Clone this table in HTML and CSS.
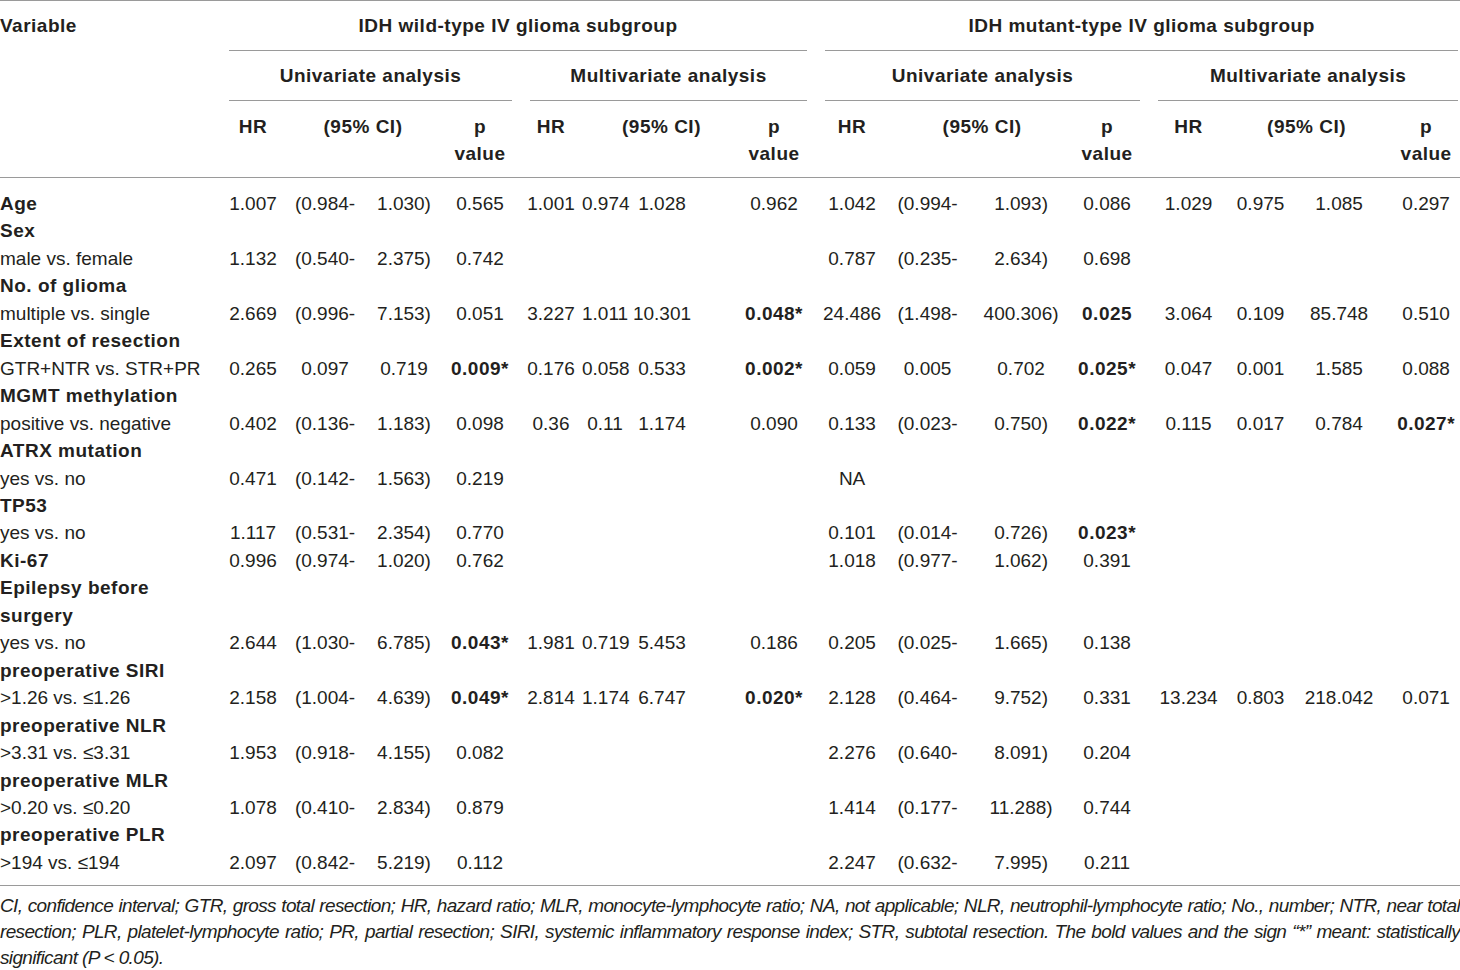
FILE: index.html
```html
<!DOCTYPE html>
<html lang="en">

<head>
    <meta charset="UTF-8">
    <meta name="viewport" content="width=device-width, initial-scale=1.0">
    <title>IDH IV glioma subgroup analysis</title>
    <link rel="stylesheet" href="styles.css">
</head>

<body>
    <table class="hr-table">
        <colgroup>
            <col class="col-var">
            <col class="col-1"><col class="col-2"><col class="col-3"><col class="col-4">
            <col class="col-5"><col class="col-6"><col class="col-7"><col class="col-8">
            <col class="col-9"><col class="col-10"><col class="col-11"><col class="col-12">
            <col class="col-13"><col class="col-14"><col class="col-15"><col class="col-16">
        </colgroup>
        <thead>
            <!-- subgroup -->
            <tr class="row-group">
                <th class="var-head">Variable</th>
                <th colspan="8" class="group"><div class="rule">IDH wild-type IV glioma subgroup</div></th>
                <th colspan="8" class="group group-last"><div class="rule">IDH mutant-type IV glioma subgroup</div></th>
            </tr>
            <!-- analysis -->
            <tr class="row-group">
                <th></th>
                <th colspan="4" class="group"><div class="rule">Univariate analysis</div></th>
                <th colspan="4" class="group"><div class="rule">Multivariate analysis</div></th>
                <th colspan="4" class="group"><div class="rule">Univariate analysis</div></th>
                <th colspan="4" class="group group-last"><div class="rule">Multivariate analysis</div></th>
            </tr>
            <!-- columns -->
            <tr class="row-cols">
                <th></th>
                <th class="c1">HR</th>
                <th colspan="2" class="ci-a">(95% CI)</th>
                <th class="c4">p<br>value</th>
                <th class="c5">HR</th>
                <th colspan="2" class="ci-b">(95% CI)</th>
                <th class="c8">p<br>value</th>
                <th class="c9">HR</th>
                <th colspan="2" class="ci-c">(95% CI)</th>
                <th class="c12">p<br>value</th>
                <th class="c13">HR</th>
                <th colspan="2" class="ci-d">(95% CI)</th>
                <th class="c16">p<br>value</th>
            </tr>
        </thead>
        <tbody id="rows">
            <!-- rows are rendered below -->
        </tbody>
    </table>

    <p class="note">CI, confidence interval; GTR, gross total resection; HR, hazard ratio; MLR, monocyte-lymphocyte ratio; NA, not applicable; NLR, neutrophil-lymphocyte ratio; No., number; NTR, near total resection; PLR, platelet-lymphocyte ratio; PR, partial resection; SIRI, systemic inflammatory response index; STR, subtotal resection. The bold values and the sign “*” meant: statistically significant (P &lt; 0.05).</p>

    <script>
        document.addEventListener("DOMContentLoaded", () => {
            // HR, CI low, CI high, p  x  (wild uni, wild multi, mutant uni, mutant multi)
            const rows = [
                { label: "Age", head: true, values: ["1.007", "(0.984-", "1.030)", "0.565", "1.001", "0.974", "1.028", "0.962", "1.042", "(0.994-", "1.093)", "0.086", "1.029", "0.975", "1.085", "0.297"] },
                { label: "Sex", head: true, values: [] },
                { label: "male vs. female", values: ["1.132", "(0.540-", "2.375)", "0.742", "", "", "", "", "0.787", "(0.235-", "2.634)", "0.698"] },
                { label: "No. of glioma", head: true, values: [] },
                { label: "multiple vs. single", values: ["2.669", "(0.996-", "7.153)", "0.051", "3.227", "1.011", "10.301", "<b>0.048*</b>", "24.486", "(1.498-", "400.306)", "<b>0.025</b>", "3.064", "0.109", "85.748", "0.510"] },
                { label: "Extent of resection", head: true, values: [] },
                { label: "GTR+NTR vs. STR+PR", values: ["0.265", "0.097", "0.719", "<b>0.009*</b>", "0.176", "0.058", "0.533", "<b>0.002*</b>", "0.059", "0.005", "0.702", "<b>0.025*</b>", "0.047", "0.001", "1.585", "0.088"] },
                { label: "MGMT methylation", head: true, values: [] },
                { label: "positive vs. negative", values: ["0.402", "(0.136-", "1.183)", "0.098", "0.36", "0.11", "1.174", "0.090", "0.133", "(0.023-", "0.750)", "<b>0.022*</b>", "0.115", "0.017", "0.784", "<b>0.027*</b>"] },
                { label: "ATRX mutation", head: true, values: [] },
                { label: "yes vs. no", values: ["0.471", "(0.142-", "1.563)", "0.219", "", "", "", "", "NA"] },
                { label: "TP53", head: true, values: [] },
                { label: "yes vs. no", values: ["1.117", "(0.531-", "2.354)", "0.770", "", "", "", "", "0.101", "(0.014-", "0.726)", "<b>0.023*</b>"] },
                { label: "Ki-67", head: true, values: ["0.996", "(0.974-", "1.020)", "0.762", "", "", "", "", "1.018", "(0.977-", "1.062)", "0.391"] },
                { label: "Epilepsy before surgery", head: true, values: [] },
                { label: "yes vs. no", values: ["2.644", "(1.030-", "6.785)", "<b>0.043*</b>", "1.981", "0.719", "5.453", "0.186", "0.205", "(0.025-", "1.665)", "0.138"] },
                { label: "preoperative SIRI", head: true, values: [] },
                { label: "&gt;1.26 vs. ≤1.26", values: ["2.158", "(1.004-", "4.639)", "<b>0.049*</b>", "2.814", "1.174", "6.747", "<b>0.020*</b>", "2.128", "(0.464-", "9.752)", "0.331", "13.234", "0.803", "218.042", "0.071"] },
                { label: "preoperative NLR", head: true, values: [] },
                { label: "&gt;3.31 vs. ≤3.31", values: ["1.953", "(0.918-", "4.155)", "0.082", "", "", "", "", "2.276", "(0.640-", "8.091)", "0.204"] },
                { label: "preoperative MLR", head: true, values: [] },
                { label: "&gt;0.20 vs. ≤0.20", values: ["1.078", "(0.410-", "2.834)", "0.879", "", "", "", "", "1.414", "(0.177-", "11.288)", "0.744"] },
                { label: "preoperative PLR", head: true, values: [] },
                { label: "&gt;194 vs. ≤194", values: ["2.097", "(0.842-", "5.219)", "0.112", "", "", "", "", "2.247", "(0.632-", "7.995)", "0.211"] }
            ];

            const tableBody = document.getElementById("rows");

            rows.forEach(row => {
                const tr = document.createElement("tr");
                let cells = `<td class="var${row.head ? ' head' : ''}">${row.label}</td>`;
                for (let i = 0; i < 16; i++) {
                    cells += `<td class="c${i + 1}">${row.values[i] || ""}</td>`;
                }
                tr.innerHTML = cells;
                tableBody.appendChild(tr);
            });
        });
    </script>
</body>

</html>
```

FILE: styles.css
```css
/* base */
body {
    margin: 0;
    padding: 0;
    font-family: "Liberation Sans", Arial, sans-serif;
    background-color: #fff;
    color: #231f20;
}

/* table */
.hr-table {
    width: 1460px;
    border-collapse: collapse;
    table-layout: fixed;
    font-size: 19px;
    border-top: 1px solid #9a9a9a;
    border-bottom: 1px solid #9a9a9a;
}

.col-var { width: 220px; }
.col-1 { width: 69px; }
.col-2 { width: 76px; }
.col-3 { width: 78px; }
.col-4 { width: 78px; }
.col-5 { width: 57px; }
.col-6 { width: 50px; }
.col-7 { width: 72px; }
.col-8 { width: 116px; }
.col-9 { width: 69px; }
.col-10 { width: 85px; }
.col-11 { width: 95px; }
.col-12 { width: 84px; }
.col-13 { width: 79px; }
.col-14 { width: 65px; }
.col-15 { width: 92px; }
.col-16 { width: 75px; }

.hr-table th {
    padding: 0;
    font-weight: bold;
    letter-spacing: 0.5px;
    text-align: center;
    white-space: nowrap;
}

.hr-table th.var-head {
    text-align: left;
}

/* group headers with broken rules */
.hr-table .group {
    padding: 0 9px;
}

.hr-table .group-last {
    padding-right: 2px;
}

.rule {
    line-height: 49px;
    border-bottom: 1px solid #9a9a9a;
}

.row-cols th {
    vertical-align: top;
    line-height: 27px;
    padding-top: 12px !important;
    padding-bottom: 10px !important;
    border-bottom: 1px solid #9a9a9a;
}

/* (95% CI) headers */
.hr-table .ci-a { padding-right: 6px; }
.hr-table .ci-b { padding-left: 44px; }
.hr-table .ci-c { padding-left: 14px; }

/* body cells */
.hr-table td {
    padding: 0;
    line-height: 27.45px;
    text-align: center;
    white-space: nowrap;
    vertical-align: top;
}

.hr-table td.var {
    text-align: left;
    white-space: normal;
    padding-right: 10px;
}

.hr-table td.head,
.hr-table td b {
    font-weight: bold;
    letter-spacing: 0.5px;
}

.hr-table tbody tr:first-child td {
    padding-top: 12px;
}

.hr-table tbody tr:last-child td {
    padding-bottom: 9px;
}

/* column centring */
.hr-table .c1 { padding-right: 3px; }
.hr-table .c2 { padding-right: 4px; }
.hr-table .c4 { padding-right: 4px; }
.hr-table .c5 { padding-left: 3px; }
.hr-table .c6 { padding-left: 4px; }
.hr-table .c7 { padding-right: 4px; }
.hr-table .c8 { padding-left: 32px; }
.hr-table .c9 { padding-left: 3px; }
.hr-table .c11 { padding-left: 7px; }
.hr-table .c16 { padding-left: 7px; }

/* footnote */
.note {
    margin: 0;
    padding-top: 7px;
    font-size: 19px;
    font-style: italic;
    line-height: 26px;
    letter-spacing: -0.65px;
    text-align: justify;
}
```
